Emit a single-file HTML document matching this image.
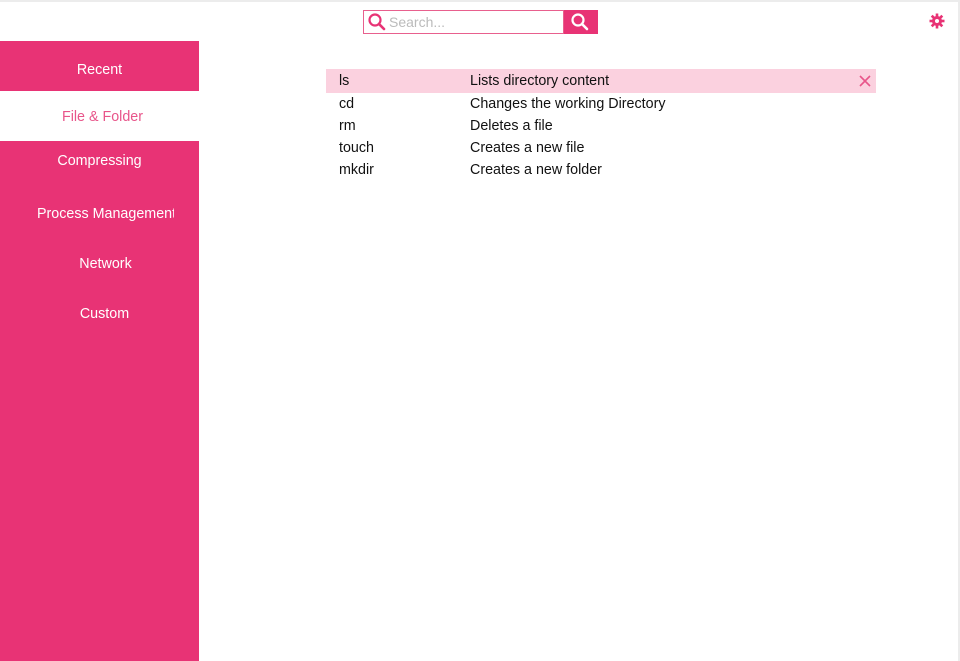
<!DOCTYPE html>
<html><head><style>
body{margin:0;width:960px;height:661px;position:relative;overflow:hidden;background:#fff;font-family:"Liberation Sans",Arial,sans-serif}
.top{position:absolute;left:0;top:0;width:960px;height:2px;background:#ececec}
.rb{position:absolute;right:0;top:0;width:2px;height:661px;background:#ececec}
.side{position:absolute;left:0;top:41px;width:199px;height:620px;background:#e83375}
.it{position:absolute;left:0;width:199px;text-align:center;color:#fff;font-size:14.3px;line-height:16px}
.act{position:absolute;left:0;top:91px;width:199px;height:50px;background:#fff}
.search{position:absolute;left:363px;top:10px;width:199px;height:22px;border:1px solid #e8608e;background:#fff}
.search span{position:absolute;left:25px;top:3px;font-size:14px;color:#bbb}
.btn{position:absolute;left:564px;top:10px;width:34px;height:24px;background:#e83375}
.row{position:absolute;left:326px;width:550px;height:22px;font-size:14.3px;color:#111;line-height:22px}
.row .a{position:absolute;left:13px;top:1px}.row .b{position:absolute;left:144px;top:1px}
</style></head><body>
<div class="top"></div><div class="rb"></div>
<div class="search"><svg style="position:absolute;left:4px;top:2px" width="18" height="18" viewBox="0 0 18 18"><circle cx="7" cy="7" r="5.5" fill="none" stroke="#e83375" stroke-width="2.2"/><line x1="11" y1="11" x2="16" y2="16" stroke="#e83375" stroke-width="2.6" stroke-linecap="round"/></svg><span>Search...</span></div>
<div class="btn"><svg style="position:absolute;left:7px;top:3px" width="18" height="18" viewBox="0 0 18 18"><circle cx="7" cy="7" r="5.5" fill="none" stroke="#fff" stroke-width="2.2"/><line x1="11" y1="11" x2="16" y2="16" stroke="#fff" stroke-width="2.6" stroke-linecap="round"/></svg></div>
<svg style="position:absolute;left:929px;top:13px" width="16" height="16" viewBox="0 0 16 16"><g stroke="#e83375" stroke-width="2.6"><line x1="8" y1="0.5" x2="8" y2="15.5"/><line x1="0.5" y1="8" x2="15.5" y2="8"/><line x1="2.7" y1="2.7" x2="13.3" y2="13.3"/><line x1="13.3" y1="2.7" x2="2.7" y2="13.3"/></g><circle cx="8" cy="8" r="5" fill="#e83375"/><circle cx="8" cy="8" r="2" fill="#fff"/></svg>
<div class="side"></div><div class="act"></div>
<div class="it" style="top:62px">Recent</div>
<div class="it" style="top:109px;color:#e8558a;left:3px">File &amp; Folder</div>
<div class="it" style="top:153px">Compressing</div>
<div class="it" style="top:206px;left:37px;width:137px;text-align:left;overflow:hidden;white-space:nowrap">Process Management</div>
<div class="it" style="top:256px;left:6px">Network</div>
<div class="it" style="top:306px;left:5px">Custom</div>
<div class="row" style="top:69px;height:24px;line-height:24px;background:#fbd1df"><span class="a" style="top:0">ls</span><span class="b" style="top:0">Lists directory content</span><svg style="position:absolute;left:533px;top:6px" width="12" height="12" viewBox="0 0 12 12"><path d="M1 1L11 11M11 1L1 11" stroke="#e8558a" stroke-width="1.6"/></svg></div>
<div class="row" style="top:92px"><span class="a">cd</span><span class="b">Changes the working Directory</span></div>
<div class="row" style="top:114px"><span class="a">rm</span><span class="b">Deletes a file</span></div>
<div class="row" style="top:136px"><span class="a">touch</span><span class="b">Creates a new file</span></div>
<div class="row" style="top:158px"><span class="a">mkdir</span><span class="b">Creates a new folder</span></div>
</body></html>
